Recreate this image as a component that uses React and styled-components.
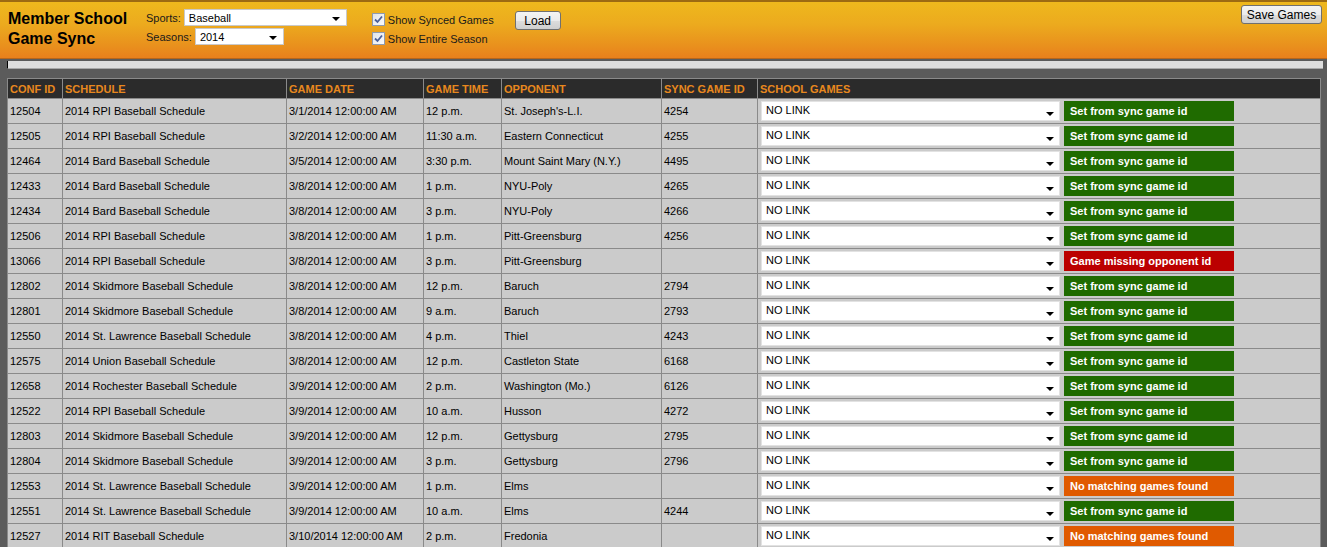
import React from "react";
import styled, { createGlobalStyle } from "styled-components";

const Global = createGlobalStyle`
  html, body { margin: 0; padding: 0; }
  body {
    background: #5b5b5b;
    font-family: "Liberation Sans", Arial, sans-serif;
    font-size: 11px;
    color: #000;
    overflow: hidden;
  }
`;

const Header = styled.header`
  height: 56px;
  border-top: 2px solid #9c6a12;
  border-bottom: 1px solid #b8661a;
  background: linear-gradient(#eeb81d 0%, #ecaa1e 40%, #e98f1d 80%, #e8801c 100%);
  display: flex;
  align-items: flex-start;
`;

const Title = styled.h1`
  margin: 0;
  padding: 7px 0 0 8px;
  width: 138px;
  font-size: 16px;
  line-height: 20px;
  font-weight: bold;
  color: #000;
`;

const Fields = styled.div`
  display: flex;
  flex-direction: column;
  gap: 2px;
  padding-top: 7px;
`;

const FieldRow = styled.div`
  display: flex;
  align-items: center;
  gap: 3px;
`;

const Label = styled.span`
  font-size: 11px;
  color: #1a1a1a;
`;

const HeadSelect = styled.div`
  display: flex;
  align-items: center;
  justify-content: space-between;
  box-sizing: border-box;
  width: ${(p) => p.$w}px;
  height: 17px;
  background: #fff;
  border: 1px solid #c9c9c9;
  padding: 0 6px 0 4px;
  font-size: 11px;
  color: #000;
`;

const Arrow = styled.span`
  width: 0;
  height: 0;
  margin-top: 3px;
  border-left: 4px solid transparent;
  border-right: 4px solid transparent;
  border-top: 4px solid #000;
`;

const Checks = styled.div`
  display: flex;
  flex-direction: column;
  gap: 6px;
  padding: 11px 0 0 25px;
`;

const CheckRow = styled.label`
  display: flex;
  align-items: center;
  gap: 3px;
  font-size: 11px;
  color: #1a1a1a;
  height: 13px;
`;

const Box = styled.span`
  width: 11px;
  height: 11px;
  border: 1px solid #8e9bb0;
  background: linear-gradient(135deg, #dfe3ea, #fbfbfb);
  display: flex;
  align-items: center;
  justify-content: center;
`;

const Button = styled.button`
  font-family: "Liberation Sans", Arial, sans-serif;
  font-size: 12px;
  height: 19px;
  padding: 0;
  white-space: nowrap;
  border: 1px solid #707070;
  border-radius: 3px;
  background: linear-gradient(#f4f4f4 0%, #ebebeb 50%, #dddddd 51%, #cfcfcf 100%);
  color: #000;
  line-height: 16px;
  cursor: default;
`;

const LoadButton = styled(Button)`
  margin: 9px 0 0 21px;
  width: 46px;
`;

const SaveButton = styled(Button)`
  margin: 3px 5px 0 auto;
  width: 81px;
`;

const Main = styled.main`
  padding: 2px 4px 0 7px;
`;

const Strip = styled.div`
  height: 7px;
  background: #dedede;
  border-left: 1px solid #000;
  border-bottom: 1px solid #a8a8a8;
  margin-bottom: 9px;
`;

const Table = styled.table`
  border-collapse: collapse;
  width: 1313px;
  table-layout: fixed;
  font-size: 11px;
`;

const Th = styled.th`
  background: #2b2b2b;
  color: #e8881e;
  font-weight: bold;
  text-align: left;
  height: 20px;
  padding: 0 2px;
  border: 1px solid #8a8a8a;
  white-space: nowrap;
  box-sizing: border-box;
`;

const Td = styled.td`
  background: #cbcbcb;
  height: 25px;
  padding: 0 2px;
  border: 1px solid #8a8a8a;
  white-space: nowrap;
  overflow: hidden;
  box-sizing: border-box;
`;

const GameCell = styled.div`
  display: flex;
  align-items: center;
  gap: 4px;
  padding-left: 1px;
`;

const RowSelect = styled.div`
  box-sizing: border-box;
  width: 299px;
  height: 20px;
  background: #fff;
  border: 1px solid #e2e2e2;
  display: flex;
  align-items: flex-start;
  justify-content: space-between;
  padding: 2px 5px 0 4px;
  font-size: 11px;
  color: #000;
`;

const RowArrow = styled(Arrow)`
  margin-top: 8px;
`;

const COLORS = { set: "#1f6b00", missing: "#bb0000", nomatch: "#e05a00" };
const TEXTS = {
  set: "Set from sync game id",
  missing: "Game missing opponent id",
  nomatch: "No matching games found",
};

const Status = styled.div`
  width: 170px;
  height: 20px;
  box-sizing: border-box;
  background: ${(p) => COLORS[p.$kind]};
  color: #fff;
  font-weight: bold;
  font-size: 11px;
  line-height: 20px;
  padding-left: 6px;
`;

const rows = [
  ["12504", "2014 RPI Baseball Schedule", "3/1/2014 12:00:00 AM", "12 p.m.", "St. Joseph's-L.I.", "4254", "set"],
  ["12505", "2014 RPI Baseball Schedule", "3/2/2014 12:00:00 AM", "11:30 a.m.", "Eastern Connecticut", "4255", "set"],
  ["12464", "2014 Bard Baseball Schedule", "3/5/2014 12:00:00 AM", "3:30 p.m.", "Mount Saint Mary (N.Y.)", "4495", "set"],
  ["12433", "2014 Bard Baseball Schedule", "3/8/2014 12:00:00 AM", "1 p.m.", "NYU-Poly", "4265", "set"],
  ["12434", "2014 Bard Baseball Schedule", "3/8/2014 12:00:00 AM", "3 p.m.", "NYU-Poly", "4266", "set"],
  ["12506", "2014 RPI Baseball Schedule", "3/8/2014 12:00:00 AM", "1 p.m.", "Pitt-Greensburg", "4256", "set"],
  ["13066", "2014 RPI Baseball Schedule", "3/8/2014 12:00:00 AM", "3 p.m.", "Pitt-Greensburg", "", "missing"],
  ["12802", "2014 Skidmore Baseball Schedule", "3/8/2014 12:00:00 AM", "12 p.m.", "Baruch", "2794", "set"],
  ["12801", "2014 Skidmore Baseball Schedule", "3/8/2014 12:00:00 AM", "9 a.m.", "Baruch", "2793", "set"],
  ["12550", "2014 St. Lawrence Baseball Schedule", "3/8/2014 12:00:00 AM", "4 p.m.", "Thiel", "4243", "set"],
  ["12575", "2014 Union Baseball Schedule", "3/8/2014 12:00:00 AM", "12 p.m.", "Castleton State", "6168", "set"],
  ["12658", "2014 Rochester Baseball Schedule", "3/9/2014 12:00:00 AM", "2 p.m.", "Washington (Mo.)", "6126", "set"],
  ["12522", "2014 RPI Baseball Schedule", "3/9/2014 12:00:00 AM", "10 a.m.", "Husson", "4272", "set"],
  ["12803", "2014 Skidmore Baseball Schedule", "3/9/2014 12:00:00 AM", "12 p.m.", "Gettysburg", "2795", "set"],
  ["12804", "2014 Skidmore Baseball Schedule", "3/9/2014 12:00:00 AM", "3 p.m.", "Gettysburg", "2796", "set"],
  ["12553", "2014 St. Lawrence Baseball Schedule", "3/9/2014 12:00:00 AM", "1 p.m.", "Elms", "", "nomatch"],
  ["12551", "2014 St. Lawrence Baseball Schedule", "3/9/2014 12:00:00 AM", "10 a.m.", "Elms", "4244", "set"],
  ["12527", "2014 RIT Baseball Schedule", "3/10/2014 12:00:00 AM", "2 p.m.", "Fredonia", "", "nomatch"],
];

const widths = [55, 224, 137, 78, 160, 96, 563];
const heads = ["CONF ID", "SCHEDULE", "GAME DATE", "GAME TIME", "OPPONENT", "SYNC GAME ID", "SCHOOL GAMES"];

const Check = ({ children }) => (
  <CheckRow>
    <Box>
      <svg width="9" height="9" viewBox="0 0 9 9">
        <path d="M1 4.5 L3.5 7 L8 1.5" fill="none" stroke="#4a5f9a" strokeWidth="1.8" />
      </svg>
    </Box>
    {children}
  </CheckRow>
);

export default function App() {
  return (
    <>
      <Global />
      <Header>
        <Title>
          Member School
          <br />
          Game Sync
        </Title>
        <Fields>
          <FieldRow>
            <Label>Sports:</Label>
            <HeadSelect $w={163}>
              Baseball
              <Arrow />
            </HeadSelect>
          </FieldRow>
          <FieldRow>
            <Label>Seasons:</Label>
            <HeadSelect $w={89}>
              2014
              <Arrow />
            </HeadSelect>
          </FieldRow>
        </Fields>
        <Checks>
          <Check>Show Synced Games</Check>
          <Check>Show Entire Season</Check>
        </Checks>
        <LoadButton>Load</LoadButton>
        <SaveButton>Save Games</SaveButton>
      </Header>
      <Main>
        <Strip />
        <Table>
          <colgroup>
            {widths.map((w, i) => (
              <col key={i} style={{ width: w }} />
            ))}
          </colgroup>
          <thead>
            <tr>
              {heads.map((h) => (
                <Th key={h}>{h}</Th>
              ))}
            </tr>
          </thead>
          <tbody>
            {rows.map((r, i) => (
              <tr key={i}>
                {r.slice(0, 6).map((c, j) => (
                  <Td key={j}>{c}</Td>
                ))}
                <Td>
                  <GameCell>
                    <RowSelect>
                      NO LINK
                      <RowArrow />
                    </RowSelect>
                    <Status $kind={r[6]}>{TEXTS[r[6]]}</Status>
                  </GameCell>
                </Td>
              </tr>
            ))}
          </tbody>
        </Table>
      </Main>
    </>
  );
}
